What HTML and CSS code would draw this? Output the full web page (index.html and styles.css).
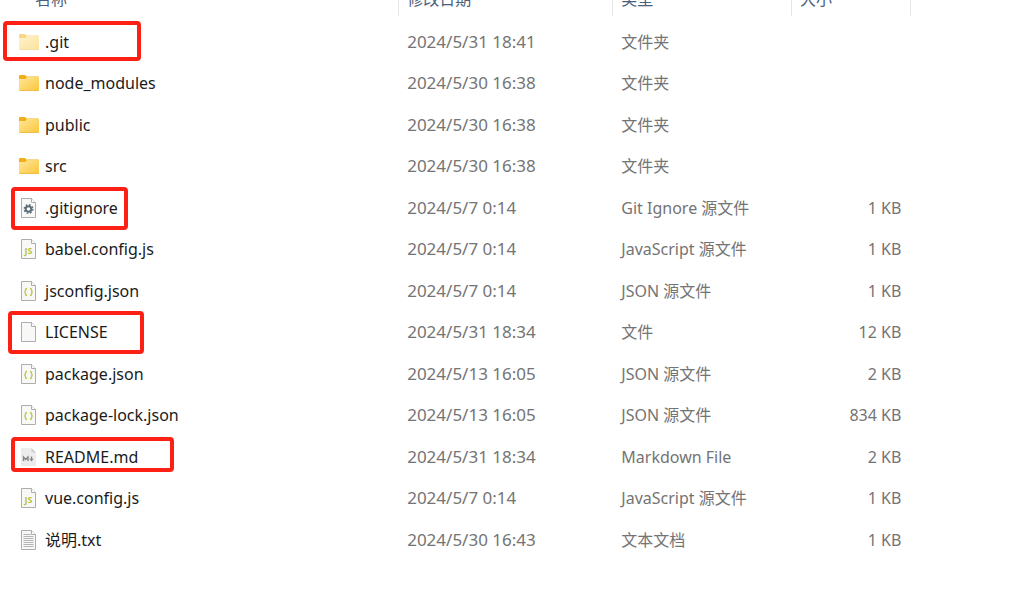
FILE: index.html
```html
<!DOCTYPE html>
<html lang="zh-CN">
<head>
  <meta charset="UTF-8">
  <meta name="viewport" content="width=device-width, initial-scale=1.0">
  <title>文件列表</title>
  <link rel="stylesheet" href="styles.css">
</head>
<body>
  <!-- 图标定义 -->
  <svg class="defs" width="0" height="0" aria-hidden="true">
    <defs>
      <linearGradient id="folderFill" x1="0" y1="0" x2="1" y2="1">
        <stop offset="0" stop-color="#ffe69a"/>
        <stop offset="1" stop-color="#fbc73a"/>
      </linearGradient>
    </defs>
    <symbol id="folder" viewBox="0 0 20 20">
      <path d="M0 3a1 1 0 0 1 1-1h5l1.500 1.500H19.500V10H0z" fill="#f2ae18"/>
      <path d="M0 6h6.500l1.500-2H20v13a1 1 0 0 1-1 1H1a1 1 0 0 1-1-1z" fill="url(#folderFill)"/>
      <path d="M.5 17.500h19" stroke="#efbd45"/>
    </symbol>
    <symbol id="page" viewBox="0 0 20 20">
      <path d="M2.500.500h10l4 4v15h-14z" fill="#f8f8f7" stroke="#adadab"/>
      <path d="M12.500.500v4h4" fill="#fff" stroke="#adadab"/>
    </symbol>
    <symbol id="gear" viewBox="0 0 20 20">
      <use href="#page"/>
      <circle cx="9.500" cy="11" r="2.800" fill="none" stroke="#5c6e78" stroke-width="2"/>
      <circle cx="9.500" cy="11" r="4.300" fill="none" stroke="#5c6e78" stroke-width="1.400" stroke-dasharray="1.700 1.680"/>
    </symbol>
    <symbol id="js" viewBox="0 0 20 20">
      <use href="#page"/>
      <text x="9.500" y="15" class="icon-js">JS</text>
    </symbol>
    <symbol id="json" viewBox="0 0 20 20">
      <use href="#page"/>
      <path d="M8 7.500c-1.500 0-1.500.5-1.500 1.500s0 2-1.200 2c1.200 0 1.200 1 1.200 2s0 1.500 1.500 1.500M11 7.500c1.500 0 1.500.5 1.500 1.500s0 2 1.200 2c-1.200 0-1.200 1-1.200 2s0 1.500-1.500 1.500" fill="none" stroke="#c0c850" stroke-width="1.500"/>
    </symbol>
    <symbol id="markdown" viewBox="0 0 20 20">
      <path d="M2 1h10.500L17 5.500V19H2z" fill="#ececec"/>
      <path d="M12.500 1v4.500H17z" fill="#cfcfcf"/>
      <path d="M4.500 14v-4l2.200 2.500L9 10v4" fill="none" stroke="#858585" stroke-width="1.400"/>
      <path d="M12.500 9.500V13" stroke="#858585" stroke-width="1.400"/>
      <path d="M10.300 11.700h4.400l-2.200 2.800z" fill="#858585"/>
    </symbol>
    <symbol id="txt" viewBox="0 0 20 20">
      <use href="#page"/>
      <path d="M4.500 4.500h7M4.500 6.500h10M4.500 8.500h10M4.500 10.500h10M4.500 12.500h10M4.500 14.500h10M4.500 16.500h10" stroke="#b4b4b4"/>
    </symbol>
  </svg>

  <table class="files">
    <colgroup>
      <col class="col-name">
      <col class="col-date">
      <col class="col-type">
      <col class="col-size">
    </colgroup>
    <thead>
      <tr>
        <th scope="col">名称</th>
        <th scope="col">修改日期</th>
        <th scope="col">类型</th>
        <th scope="col">大小</th>
      </tr>
    </thead>
    <tbody>
      <tr>
        <td><div class="name"><svg class="icon hidden-item"><use href="#folder"/></svg>.git</div><span class="mark mark-git"></span></td>
        <td class="date">2024/5/31 18:41</td>
        <td>文件夹</td>
        <td></td>
      </tr>
      <tr>
        <td><div class="name"><svg class="icon"><use href="#folder"/></svg>node_modules</div></td>
        <td class="date">2024/5/30 16:38</td>
        <td>文件夹</td>
        <td></td>
      </tr>
      <tr>
        <td><div class="name"><svg class="icon"><use href="#folder"/></svg>public</div></td>
        <td class="date">2024/5/30 16:38</td>
        <td>文件夹</td>
        <td></td>
      </tr>
      <tr>
        <td><div class="name"><svg class="icon"><use href="#folder"/></svg>src</div></td>
        <td class="date">2024/5/30 16:38</td>
        <td>文件夹</td>
        <td></td>
      </tr>
      <tr>
        <td><div class="name"><svg class="icon"><use href="#gear"/></svg>.gitignore</div><span class="mark mark-ignore"></span></td>
        <td class="date">2024/5/7 0:14</td>
        <td>Git Ignore 源文件</td>
        <td>1 KB</td>
      </tr>
      <tr>
        <td><div class="name"><svg class="icon"><use href="#js"/></svg>babel.config.js</div></td>
        <td class="date">2024/5/7 0:14</td>
        <td>JavaScript 源文件</td>
        <td>1 KB</td>
      </tr>
      <tr>
        <td><div class="name"><svg class="icon"><use href="#json"/></svg>jsconfig.json</div></td>
        <td class="date">2024/5/7 0:14</td>
        <td>JSON 源文件</td>
        <td>1 KB</td>
      </tr>
      <tr>
        <td><div class="name"><svg class="icon"><use href="#page"/></svg>LICENSE</div><span class="mark mark-license"></span></td>
        <td class="date">2024/5/31 18:34</td>
        <td>文件</td>
        <td>12 KB</td>
      </tr>
      <tr>
        <td><div class="name"><svg class="icon"><use href="#json"/></svg>package.json</div></td>
        <td class="date">2024/5/13 16:05</td>
        <td>JSON 源文件</td>
        <td>2 KB</td>
      </tr>
      <tr>
        <td><div class="name"><svg class="icon"><use href="#json"/></svg>package-lock.json</div></td>
        <td class="date">2024/5/13 16:05</td>
        <td>JSON 源文件</td>
        <td>834 KB</td>
      </tr>
      <tr>
        <td><div class="name"><svg class="icon"><use href="#markdown"/></svg>README.md</div><span class="mark mark-readme"></span></td>
        <td class="date">2024/5/31 18:34</td>
        <td>Markdown File</td>
        <td>2 KB</td>
      </tr>
      <tr>
        <td><div class="name"><svg class="icon"><use href="#js"/></svg>vue.config.js</div></td>
        <td class="date">2024/5/7 0:14</td>
        <td>JavaScript 源文件</td>
        <td>1 KB</td>
      </tr>
      <tr>
        <td><div class="name"><svg class="icon"><use href="#txt"/></svg>说明.txt</div></td>
        <td class="date">2024/5/30 16:43</td>
        <td>文本文档</td>
        <td>1 KB</td>
      </tr>
    </tbody>
  </table>
</body>
</html>
```
FILE: styles.css
```css
/* 页面 */
body {
  margin: 0;
  background-color: #fff;
  color: #747474;
  font-family: "Noto Sans", "Noto Sans CJK SC", sans-serif;
  font-size: 16px;
  line-height: 24px;
  overflow: hidden;
}

.defs {
  position: absolute;
}

/* 文件列表 */
.files {
  width: 89%;
  margin-top: -19px; /* 表头上半部分滚出窗口 */
  table-layout: fixed;
  border-collapse: separate;
  border-spacing: 0;
}

.col-name {
  width: 43.8%;
}

.col-date {
  width: 23.5%;
}

.col-type {
  width: 19.6%;
}

/* 表头 */
.files th {
  height: 35px;
  padding: 0 8px;
  border-right: 1px solid #e5e5e5;
  color: #4c607a;
  font-weight: normal;
  text-align: left;
}

.files th:first-child {
  padding-left: 35px;
}

/* 表头与第一行之间的间隔 */
.files thead::after {
  content: "";
  display: table-row;
  height: 5px;
}

.files td {
  position: relative;
  height: 41px;
  padding: 0 8px;
  white-space: nowrap;
}

.files tbody tr:nth-child(even) td {
  height: 42px;
}

.files td:first-child {
  padding-left: 19px;
  color: #1b1b1b;
}

.files td:last-child {
  padding-right: 10px;
  text-align: right;
}

.files .date {
  font-size: 17px;
}

.name {
  display: flex;
  align-items: center;
  gap: 6px;
}

/* 图标 */
.icon {
  width: 20px;
  height: 20px;
  flex: none;
}

.hidden-item {
  opacity: 0.5;
}

.icon-js {
  fill: #bcc43c;
  font-size: 9px;
  font-weight: bold;
  text-anchor: middle;
}

/* 红色标注框 */
.mark {
  position: absolute;
  top: 0;
  left: 11px;
  box-sizing: border-box;
  height: 43px;
  border: 4px solid #fd2015;
  border-radius: 4px;
}

.mark-git {
  left: 3px;
  width: 138px;
  height: 40px;
}

.mark-ignore {
  width: 117px;
}

.mark-license {
  left: 8px;
  width: 136px;
}

.mark-readme {
  top: 1px;
  width: 163px;
  height: 35px;
}
```
